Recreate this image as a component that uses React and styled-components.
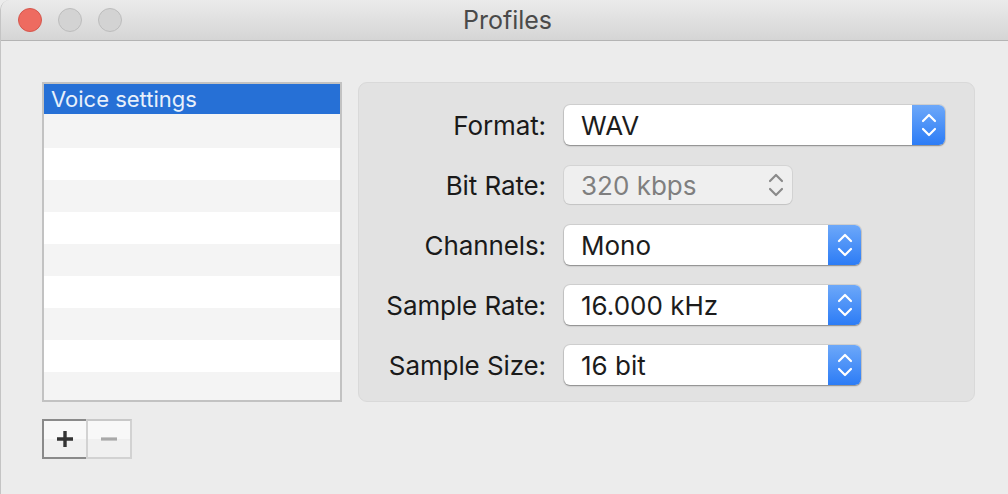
import React from "react";
import styled, { createGlobalStyle } from "styled-components";

const GlobalStyle = createGlobalStyle`
  html, body {
    margin: 0;
    padding: 0;
    background: #ececec;
  }
  body {
    font-family: Inter, "Open Sans", "Liberation Sans", sans-serif;
    -webkit-font-smoothing: antialiased;
  }
`;

const Window = styled.div`
  width: 1008px;
  height: 494px;
  background: #ececec;
  border-left: 1px solid #c4c4c4;
  border-top-left-radius: 10px;
  overflow: hidden;
  box-sizing: border-box;
`;

const TitleBar = styled.div`
  height: 41px;
  display: flex;
  align-items: center;
  position: relative;
  background: linear-gradient(#ebebeb, #d5d5d5);
  border-bottom: 1px solid #b4b4b4;
  box-sizing: border-box;
  padding-left: 17px;
  gap: 16px;
`;

const Light = styled.span`
  width: 24px;
  height: 24px;
  border-radius: 50%;
  box-sizing: border-box;
  background: ${(p) => (p.red ? "#ee6b60" : "#d3d3d3")};
  border: 1px solid ${(p) => (p.red ? "#d4574d" : "#bcbcbc")};
`;

const Title = styled.div`
  position: absolute;
  left: 0;
  right: 0;
  top: 0;
  bottom: 0;
  display: flex;
  align-items: center;
  justify-content: center;
  font-size: 25px;
  color: #4a4a4a;
  padding-left: 6px;
  pointer-events: none;
`;

const Body = styled.div`
  display: flex;
  gap: 16px;
  padding: 41px 0 0 41px;
`;

const LeftColumn = styled.div`
  display: flex;
  flex-direction: column;
  gap: 17px;
`;

const List = styled.div`
  width: 300px;
  height: 320px;
  border: 2px solid #c2c2c2;
  box-sizing: border-box;
  background: #f4f4f4;
  overflow: hidden;
`;

const Row = styled.div`
  height: 32px;
  box-sizing: border-box;
  padding-left: 7px;
  display: flex;
  align-items: center;
  font-size: 22px;
  background: ${(p) => (p.selected ? "#2670d6" : p.odd ? "#ffffff" : "#f4f4f4")};
  color: ${(p) => (p.selected ? "#e8f0fb" : "#111")};
  &:first-child {
    height: 30px;
  }
  &:nth-child(2) {
    height: 34px;
  }
`;

const ButtonBar = styled.div`
  display: flex;
`;

const SquareButton = styled.div`
  width: 46px;
  height: 40px;
  box-sizing: border-box;
  display: flex;
  align-items: center;
  justify-content: center;
  background: linear-gradient(#f8f8f8 50%, #f0f0f0 50%);
  border: 2px solid ${(p) => (p.active ? "#8a8a8a" : "#d2d2d2")};
  border-top-color: ${(p) => (p.active ? "#8a8a8a" : "#c8c8c8")};
  margin-left: ${(p) => (p.active ? "0" : "-2px")};
`;

const Panel = styled.div`
  width: 617px;
  height: 320px;
  box-sizing: border-box;
  background: #e2e2e2;
  border: 1px solid #d9d9d9;
  border-radius: 9px;
  display: grid;
  grid-template-columns: 187px auto;
  grid-auto-rows: 40px;
  row-gap: 20px;
  column-gap: 18px;
  padding-top: 22px;
  align-items: center;
  justify-items: start;
`;

const Label = styled.div`
  justify-self: end;
  font-size: 26px;
  letter-spacing: -0.1px;
  color: #1a1a1a;
`;

const Popup = styled.div`
  width: ${(p) => p.width}px;
  height: ${(p) => (p.disabled ? 38 : 40)}px;
  box-sizing: border-box;
  border-radius: 6px;
  display: flex;
  align-items: stretch;
  background: ${(p) => (p.disabled ? "#efefef" : "#fff")};
  box-shadow: ${(p) =>
    p.disabled
      ? "0 0 0 1px rgba(0,0,0,0.06), 0 1px 1px rgba(0,0,0,0.08)"
      : "0 0 0 1px rgba(0,0,0,0.08), 0 1px 1.5px rgba(0,0,0,0.35)"};
  overflow: hidden;
`;

const PopupText = styled.div`
  flex: 1;
  display: flex;
  align-items: center;
  padding-left: 17px;
  font-size: 26px;
  color: ${(p) => (p.disabled ? "#7f7f7f" : "#1c1c1c")};
`;

const Stepper = styled.div`
  width: 33px;
  display: flex;
  align-items: center;
  justify-content: center;
  background: ${(p) =>
    p.disabled ? "transparent" : "linear-gradient(#6da8f9, #2c7cf6)"};
`;

const Chevrons = ({ color }) => (
  <svg width="16" height="26" viewBox="0 0 16 26">
    <path
      d="M2 9 L8 3 L14 9 M2 17 L8 23 L14 17"
      fill="none"
      stroke={color}
      strokeWidth="2.2"
      strokeLinecap="round"
      strokeLinejoin="round"
    />
  </svg>
);

const fields = [
  { label: "Format:", value: "WAV", width: 381 },
  { label: "Bit Rate:", value: "320 kbps", width: 228, disabled: true },
  { label: "Channels:", value: "Mono", width: 297 },
  { label: "Sample Rate:", value: "16.000 kHz", width: 297 },
  { label: "Sample Size:", value: "16 bit", width: 297 },
];

const rows = ["Voice settings", "", "", "", "", "", "", "", "", ""];

const App = () => (
  <>
    <GlobalStyle />
    <Window>
      <TitleBar>
        <Light red />
        <Light />
        <Light />
        <Title>Profiles</Title>
      </TitleBar>
      <Body>
        <LeftColumn>
          <List>
            {rows.map((r, i) => (
              <Row key={i} selected={i === 0} odd={i % 2 === 0}>
                {r}
              </Row>
            ))}
          </List>
          <ButtonBar>
            <SquareButton active>
              <svg width="20" height="20" viewBox="0 0 20 20">
                <path d="M10 2 V18 M2 10 H18" stroke="#333" strokeWidth="3.4" />
              </svg>
            </SquareButton>
            <SquareButton>
              <svg width="20" height="20" viewBox="0 0 20 20">
                <path d="M2 10 H18" stroke="#a9a9a9" strokeWidth="3.2" />
              </svg>
            </SquareButton>
          </ButtonBar>
        </LeftColumn>
        <Panel>
          {fields.map((f) => (
            <React.Fragment key={f.label}>
              <Label>{f.label}</Label>
              <Popup width={f.width} disabled={f.disabled}>
                <PopupText disabled={f.disabled}>{f.value}</PopupText>
                <Stepper disabled={f.disabled}>
                  <Chevrons color={f.disabled ? "#8a8a8a" : "#fff"} />
                </Stepper>
              </Popup>
            </React.Fragment>
          ))}
        </Panel>
      </Body>
    </Window>
  </>
);

export default App;
